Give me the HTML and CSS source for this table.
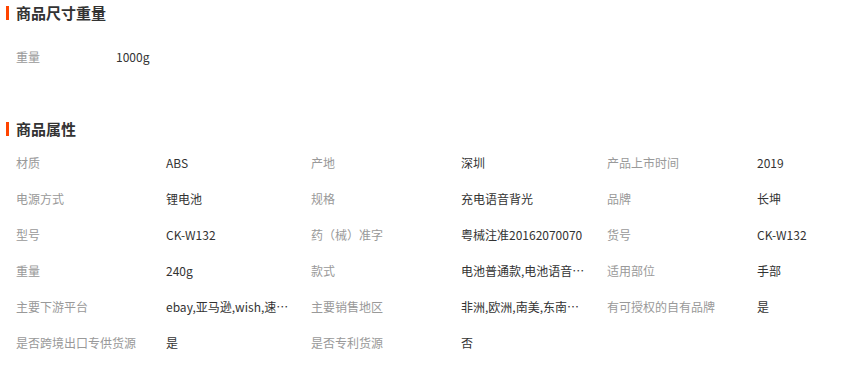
FILE: index.html
```html
<!DOCTYPE html>
<html lang="zh-CN">
<head>
<meta charset="utf-8">
<title>商品属性</title>
<link rel="stylesheet" href="styles.css">
</head>
<body>
<section class="section sec-dims">
  <h2 class="section-title"><span class="bar"></span>商品尺寸重量</h2>
  <div class="dims-list">
    <div class="dim-row"><span class="label dim-label">重量</span><span class="value">1000g</span></div>
  </div>
</section>
<section class="section sec-attrs">
  <h2 class="section-title"><span class="bar"></span>商品属性</h2>
  <div class="attr-grid">
    <div class="cell"><span class="label">材质</span><span class="value">ABS</span></div>
    <div class="cell"><span class="label">产地</span><span class="value">深圳</span></div>
    <div class="cell"><span class="label">产品上市时间</span><span class="value">2019</span></div>
    <div class="cell"><span class="label">电源方式</span><span class="value">锂电池</span></div>
    <div class="cell"><span class="label">规格</span><span class="value">充电语音背光</span></div>
    <div class="cell"><span class="label">品牌</span><span class="value">长坤</span></div>
    <div class="cell"><span class="label">型号</span><span class="value">CK-W132</span></div>
    <div class="cell"><span class="label">药（械）准字</span><span class="value">粤械注准20162070070</span></div>
    <div class="cell"><span class="label">货号</span><span class="value">CK-W132</span></div>
    <div class="cell"><span class="label">重量</span><span class="value">240g</span></div>
    <div class="cell"><span class="label">款式</span><span class="value">电池普通款,电池语音…</span></div>
    <div class="cell"><span class="label">适用部位</span><span class="value">手部</span></div>
    <div class="cell"><span class="label">主要下游平台</span><span class="value">ebay,亚马逊,wish,速…</span></div>
    <div class="cell"><span class="label">主要销售地区</span><span class="value">非洲,欧洲,南美,东南…</span></div>
    <div class="cell"><span class="label">有可授权的自有品牌</span><span class="value">是</span></div>
    <div class="cell"><span class="label">是否跨境出口专供货源</span><span class="value">是</span></div>
    <div class="cell"><span class="label">是否专利货源</span><span class="value">否</span></div>
  </div>
</section>
</body>
</html>
```

FILE: styles.css
```css
html, body {
  margin: 0;
  padding: 0;
  background: #fff;
}
body {
  font-family: "Noto Sans CJK SC", "Noto Sans", sans-serif;
  font-size: 12px;
  color: #333;
  width: 852px;
  overflow: hidden;
}
.section-title {
  margin: 0;
  height: 25px;
  display: flex;
  align-items: center;
  gap: 7px;
  padding-left: 6px;
  font-size: 15px;
  font-weight: bold;
  color: #333;
}
.bar {
  width: 3px;
  height: 14px;
  background: #ff4400;
  flex: none;
}
.dims-list {
  margin-top: 13px;
  padding-left: 16px;
}
.dim-row {
  height: 36px;
  display: flex;
  align-items: center;
}
.sec-attrs {
  margin-top: 42px;
}
.attr-grid {
  margin-top: 3px;
  padding-left: 16px;
  display: grid;
  grid-template-columns: 295px 296px 1fr;
  grid-auto-rows: 36px;
}
.cell {
  display: flex;
  align-items: center;
  min-width: 0;
}
.label {
  color: #999;
  width: 150px;
  flex: none;
  white-space: nowrap;
}
.dim-row .dim-label {
  width: 100px;
}
.value {
  color: #333;
  white-space: nowrap;
}
```
